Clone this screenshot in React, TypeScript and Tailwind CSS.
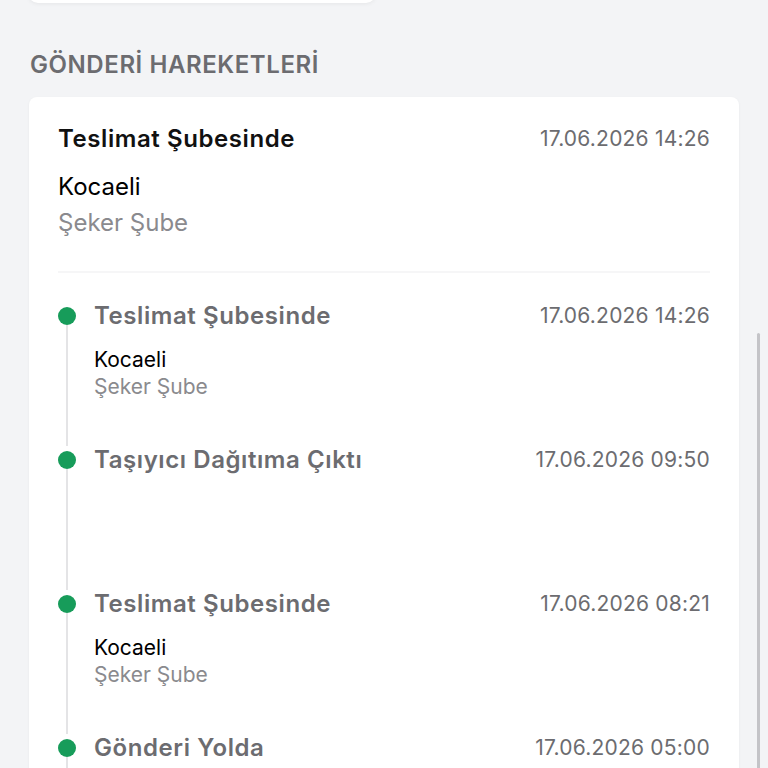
import React from "react";

type Movement = {
  title: string;
  date: string;
  city?: string;
  branch?: string;
};

const movements: Movement[] = [
  { title: "Teslimat Şubesinde", date: "17.06.2026 14:26", city: "Kocaeli", branch: "Şeker Şube" },
  { title: "Taşıyıcı Dağıtıma Çıktı", date: "17.06.2026 09:50" },
  { title: "Teslimat Şubesinde", date: "17.06.2026 08:21", city: "Kocaeli", branch: "Şeker Şube" },
  { title: "Gönderi Yolda", date: "17.06.2026 05:00" },
];

const TimelineItem: React.FC<{ item: Movement }> = ({ item }) => {
  return (
    <div className="flex min-h-[144px]">
      <div className="flex w-[18px] shrink-0 flex-col items-center">
        <div className="mt-[5px] h-[18px] w-[18px] rounded-full bg-[#179c5a]" />
        <div className="w-[2px] flex-1 bg-[#e4e4e6]" />
      </div>
      <div className="ml-[18px] flex-1">
        <div className="flex items-start justify-between">
          <span className="text-[24px] font-semibold leading-[28px] tracking-[0.024em] text-[#6c6c70]">
            {item.title}
          </span>
          <span className="text-[21px] leading-[28px] tracking-[0.01em] text-[#6c6c70]">{item.date}</span>
        </div>
        {item.city && (
          <div className="mt-[16px]">
            <div className="text-[21px] leading-[27px] text-black">{item.city}</div>
            <div className="text-[21px] leading-[27px] text-[#8a8a8e]">{item.branch}</div>
          </div>
        )}
      </div>
    </div>
  );
};

export default function App() {
  const latest = movements[0];

  return (
    <div className="relative h-screen overflow-hidden bg-[#f3f4f6] font-['Inter',sans-serif]">
      <div className="ml-[28px] -mt-[17px] h-[20px] w-[348px] rounded-xl bg-white shadow-[0_1px_4px_rgba(0,0,0,0.06)]" />

      <h2 className="ml-[30px] mt-[48px] text-[24px] font-semibold leading-[28px] tracking-[0.024em] text-[#6c6c70]">
        GÖNDERİ HAREKETLERİ
      </h2>

      <div className="mx-[29px] mt-[18px] rounded-lg bg-white px-[29px] pt-[28px] shadow-[0_1px_3px_rgba(0,0,0,0.05)]">
        <div className="flex items-start justify-between">
          <span className="text-[24px] font-semibold leading-[28px] tracking-[0.024em] text-[#111]">
            {latest.title}
          </span>
          <span className="text-[21px] leading-[28px] tracking-[0.01em] text-[#6c6c70]">{latest.date}</span>
        </div>
        <div className="mt-[20px] text-[24px] leading-[28px] text-black">{latest.city}</div>
        <div className="mt-[8px] text-[24px] leading-[28px] text-[#8a8a8e]">{latest.branch}</div>

        <div className="mt-[34px] h-[2px] bg-[#f6f6f7]" />

        <div className="pt-[29px]">
          {movements.map((m, i) => (
            <TimelineItem key={i} item={m} />
          ))}
        </div>
      </div>

      <div className="absolute right-[8px] top-[333px] h-[500px] w-[3px] rounded-full bg-[#c4c4c8]" />
    </div>
  );
}
